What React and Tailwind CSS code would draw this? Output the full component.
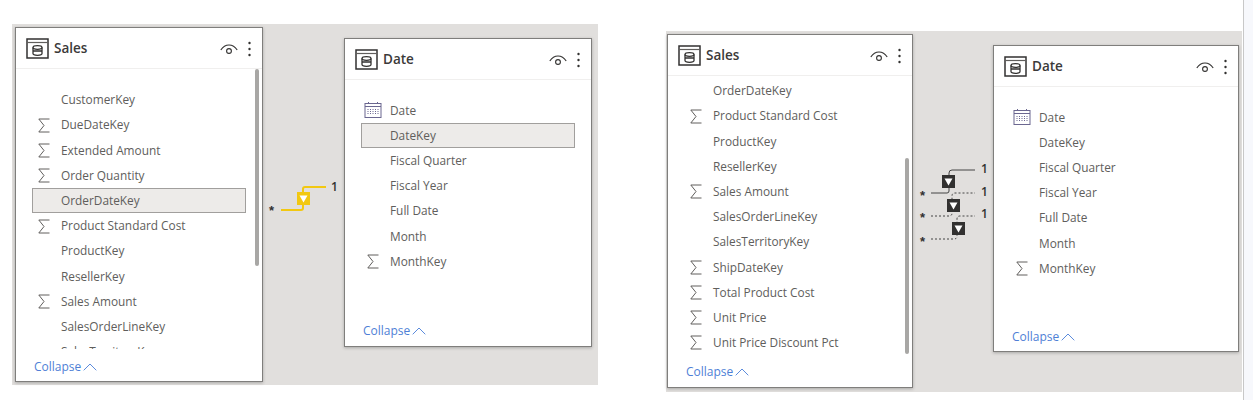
const font = { fontFamily: '"Open Sans", "Liberation Sans", sans-serif' };

const TableIcon = () => (
  <svg width="23" height="21" viewBox="0 0 23 21" fill="none" stroke="#323130" className="shrink-0">
    <rect x="1" y="1" width="21" height="19" strokeWidth="1.5" />
    <path d="M1 4.500h21" strokeWidth="1.2" stroke="#605e5c" />
    <ellipse cx="11.500" cy="9.500" rx="4.500" ry="1.800" strokeWidth="1.300" />
    <path d="M7 9.500v6c0 1 2 1.800 4.500 1.800s4.500-.8 4.500-1.800v-6M7 13h9" strokeWidth="1.300" />
  </svg>
);

const EyeIcon = () => (
  <svg width="18" height="12" viewBox="0 0 18 12" fill="none" stroke="#323130" strokeWidth="1.1" className="mt-[3px]">
    <path d="M.8 6C3 2.600 5.800 1 9 1s6 1.600 8.200 5" />
    <circle cx="9" cy="7" r="2.400" />
  </svg>
);

const MoreIcon = () => (
  <svg width="3" height="16" viewBox="0 0 3 16" fill="#323130" className="mt-[1px]">
    <circle cx="1.500" cy="2" r="1.200" />
    <circle cx="1.500" cy="8" r="1.200" />
    <circle cx="1.500" cy="14" r="1.200" />
  </svg>
);

const SigmaIcon = () => (
  <svg width="12" height="15" viewBox="0 0 12 15" fill="none" stroke="#605e5c" strokeWidth="1">
    <path d="M11.500 1H.8L6 7.500.8 14h10.700" />
  </svg>
);

const CalendarIcon = () => (
  <svg width="18" height="17" viewBox="0 0 18 17" fill="none" stroke="#6b6790" strokeWidth="1" className="-ml-[3px] -mt-[2px]">
    <rect x="1" y="2.500" width="16" height="14" />
    <path d="M1 5.500h16M4.500 1v2M13.500 1v2" />
    <path d="M4 8v6M6.500 8v6M9 8v6M11.500 8v6M14 8v6" strokeDasharray="1 1" />
  </svg>
);

const ChevronUp = () => (
  <svg width="14" height="8" viewBox="0 0 14 8" fill="none" stroke="#5b8bdc" strokeWidth="1">
    <path d="M.7 7.300 7 1l6.300 6.300" />
  </svg>
);

const Row = ({ name, sigma, calendar, selected }) => (
  <div
    className={`h-[25.2px] flex items-center text-[11.85px] text-[#605e5c] whitespace-nowrap border ${
      selected ? "bg-[#edebe9] border-[#a19f9d]" : "border-transparent"
    }`}
  >
    <div className="w-[28px] flex justify-start pl-[5px] shrink-0">
      {sigma && <SigmaIcon />}
      {calendar && <CalendarIcon />}
    </div>
    <span>{name}</span>
  </div>
);

const Card = ({ title, rows, className, listClass, thumbClass, footerClass }) => (
  <div className={`absolute flex flex-col bg-white border border-[#7f7e7c] shadow-[0_1px_3px_rgba(0,0,0,0.25)] ${className}`}>
    <div className="h-[41px] shrink-0 flex items-center pl-[10px] pr-[11px] border-b border-[#f0efee]">
      <TableIcon />
      <span className="ml-[5px] mt-[1px] text-[13.5px] font-semibold text-[#3b3a39]">{title}</span>
      <div className="ml-auto flex items-center gap-[10px]">
        <EyeIcon />
        <MoreIcon />
      </div>
    </div>
    <div className={`relative flex-1 overflow-hidden pl-[16px] ${listClass}`}>
      <div className="w-[214px]">
        {rows.map((r) => (
          <Row key={r.name} {...r} />
        ))}
      </div>
      {thumbClass && <div className={`absolute right-[3px] w-[4px] bg-[#a8a7a5] rounded-[2px] ${thumbClass}`} />}
    </div>
    <div className={`h-[32px] shrink-0 pl-[18px] pt-[3px] flex items-center gap-[2px] text-[12px] text-[#4f7fd6] ${footerClass || ""}`}>
      <span>Collapse</span>
      <ChevronUp />
    </div>
  </div>
);

const salesLeft = [
  { name: "CustomerKey" },
  { name: "DueDateKey", sigma: true },
  { name: "Extended Amount", sigma: true },
  { name: "Order Quantity", sigma: true },
  { name: "OrderDateKey", selected: true },
  { name: "Product Standard Cost", sigma: true },
  { name: "ProductKey" },
  { name: "ResellerKey" },
  { name: "Sales Amount", sigma: true },
  { name: "SalesOrderLineKey" },
  { name: "SalesTerritoryKey" },
];

const salesRight = [
  { name: "OrderDateKey" },
  { name: "Product Standard Cost", sigma: true },
  { name: "ProductKey" },
  { name: "ResellerKey" },
  { name: "Sales Amount", sigma: true },
  { name: "SalesOrderLineKey" },
  { name: "SalesTerritoryKey" },
  { name: "ShipDateKey", sigma: true },
  { name: "Total Product Cost", sigma: true },
  { name: "Unit Price", sigma: true },
  { name: "Unit Price Discount Pct", sigma: true },
];

const dateRows = (selected) => [
  { name: "Date", calendar: true },
  { name: "DateKey", selected },
  { name: "Fiscal Quarter" },
  { name: "Fiscal Year" },
  { name: "Full Date" },
  { name: "Month" },
  { name: "MonthKey", sigma: true },
];

const Marker = ({ x, y, fill, arrow }) => (
  <g>
    <rect x={x} y={y} width="13" height="13" fill={fill} />
    <path d={`M${x + 2.5} ${y + 3.5}h8l-4 7z`} fill={arrow} />
  </g>
);

const labelProps = { fontSize: "12", fontWeight: "600", fill: "#323130" };
const starProps = { fontSize: "13", fontWeight: "700", fill: "#323130", textAnchor: "middle", fontFamily: '"Liberation Sans", sans-serif' };

const YellowLink = () => (
  <svg className="absolute left-[250px] top-[155px]" width="80" height="50" viewBox="0 0 80 50" fill="none">
    <text x="9.500" y="36" {...starProps}>*</text>
    <path d="M19 31h20q2 0 2-2V10q0-2 2-2h21" stroke="#f2c811" strokeWidth="2" />
    <Marker x={35} y={13} fill="#f2c811" arrow="#ffffff" />
    <text x="69" y="12" {...labelProps}>1</text>
  </svg>
);

const DarkLinks = () => (
  <svg className="absolute left-[248px] top-[130px]" width="80" height="90" viewBox="0 0 80 90" fill="none">
    <text x="8.500" y="38.500" {...starProps}>*</text>
    <text x="8.500" y="61" {...starProps}>*</text>
    <text x="8.500" y="84.500" {...starProps}>*</text>
    <path d="M17 32h16q2 0 2-2V12q0-3 3-3h23" stroke="#444" strokeWidth="1" />
    <path d="M17 55h18q3 0 3-3V35q0-3 3-3h20" stroke="#444" strokeWidth="1" strokeDasharray="2 2" />
    <path d="M17 78h23q3 0 3-3V58q0-3 3-3h15" stroke="#444" strokeWidth="1" strokeDasharray="2 2" />
    <Marker x={28} y={14} fill="#323130" arrow="#ffffff" />
    <Marker x={33} y={38} fill="#323130" arrow="#ffffff" />
    <Marker x={38} y={61} fill="#323130" arrow="#ffffff" />
    <text x="67" y="12" {...labelProps}>1</text>
    <text x="67" y="35" {...labelProps}>1</text>
    <text x="67" y="57" {...labelProps}>1</text>
  </svg>
);

const App = () => {
  return (
    <div className="w-[1253px] h-[400px] bg-white flex items-start overflow-hidden" style={font}>
      <div className="relative ml-[12px] mt-[24px] w-[586px] h-[361px] bg-[#e1dfdd] shrink-0">
        <Card
          title="Sales"
          rows={salesLeft}
          className="left-[3px] top-[3px] w-[248px] h-[355px]"
          listClass="pt-[18.5px]"
          thumbClass="top-0 h-[197px]"
        />
        <YellowLink />
        <Card
          title="Date"
          rows={dateRows(true)}
          className="left-[332px] top-[14px] w-[248px] h-[309px]"
          listClass="pt-[18px]"
          footerClass="pb-[2px]"
        />
      </div>
      <div className="relative ml-[68px] mt-[31px] w-[576px] h-[361px] bg-[#e1dfdd] shrink-0">
        <Card
          title="Sales"
          rows={salesRight}
          className="left-[1px] top-[3px] w-[246px] h-[354px]"
          listClass="pt-[2.5px]"
          thumbClass="top-[82px] h-[196px]"
          footerClass="pb-[2px]"
        />
        <DarkLinks />
        <Card
          title="Date"
          rows={dateRows(false)}
          className="left-[327px] top-[14px] w-[246px] h-[307px]"
          listClass="pt-[18px]"
        />
      </div>
      <div className="ml-[1px] w-[10px] h-[400px] bg-[#f7f8fc] border-l border-[#c8c8c8] shrink-0" />
    </div>
  );
};

export default App;
